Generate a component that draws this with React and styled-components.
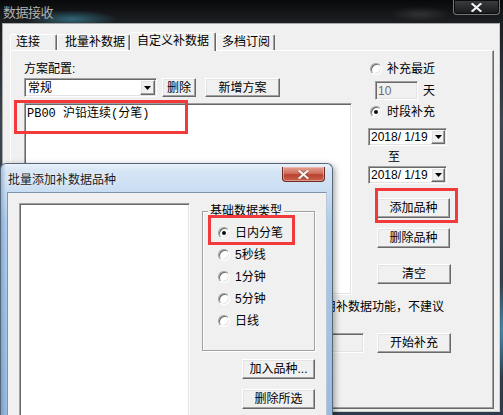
import React from "react";
import styled, { createGlobalStyle, css } from "styled-components";

const GlobalStyle = createGlobalStyle`
  html, body { margin: 0; padding: 0; background: #1b2530; }
  body {
    font-family: "Liberation Sans", "Noto Sans CJK SC", sans-serif;
    font-size: 12px;
    line-height: 14px;
  }
  * { box-sizing: border-box; }
`;

const cjk = `"Liberation Sans", "Noto Sans CJK SC", sans-serif`;

const sunken = css`
  border: 1px solid;
  border-color: #a0a0a0 #ffffff #ffffff #a0a0a0;
  box-shadow: inset 1px 1px #696969, inset -1px -1px #e3e3e3;
`;

const raised = css`
  border: 1px solid;
  border-color: #ffffff #696969 #696969 #ffffff;
  box-shadow: inset -1px -1px #a0a0a0, inset 1px 1px #e3e3e3;
`;

const Desktop = styled.div`
  position: relative;
  width: 503px;
  height: 415px;
  overflow: hidden;
  background: linear-gradient(90deg, #3a4652, #22303d);
`;

const MainWindow = styled.div`
  display: flex;
  flex-direction: column;
  height: 100%;
  background:
    radial-gradient(8px 60px at 502px 330px, rgba(80, 170, 210, 0.7), transparent 80%),
    linear-gradient(180deg, #0b0c0e 0, #1a1d20 22px, #3b4650 120px, #2c3a4a 100%);
`;

const TitleBar = styled.div`
  height: 23px;
  flex-shrink: 0;
  display: flex;
  align-items: flex-start;
  padding-left: 3px;
  background:
    radial-gradient(60px 12px at 72px 19px, rgba(70, 175, 205, 0.5), transparent 75%),
    radial-gradient(40px 10px at 420px 14px, rgba(170, 170, 170, 0.18), transparent 75%),
    linear-gradient(180deg, #08090a, #1d2023);
`;

const TitleText = styled.div`
  margin-top: 3px;
  font-family: "Noto Sans CJK SC", sans-serif;
  font-size: 13px;
  line-height: 17px;
  letter-spacing: -0.5px;
  color: #b2b2b2;
`;

const MainClose = styled.div`
  margin-left: auto;
  margin-right: 3px;
  width: 47px;
  height: 15px;
  border: 1px solid #757575;
  border-top: none;
  border-radius: 0 0 4px 4px;
  background: linear-gradient(180deg, #3c3f42, #17191b);
  box-shadow: inset 0 0 0 1px #0c0c0c;
  display: flex;
  align-items: center;
  justify-content: center;
`;

const Client = styled.div`
  flex: 1;
  min-height: 0;
  margin: 0 3px 3px 2px;
  background: #f0f0f0;
  border: 1px solid;
  border-color: #a9a9a9 #cfcfcf #cfcfcf #a9a9a9;
  padding: 8px 5px 2px 7px;
  display: flex;
  flex-direction: column;
`;

const TabStrip = styled.div`
  display: flex;
  align-items: flex-end;
  height: 18px;
  flex-shrink: 0;
  position: relative;
  z-index: 1;
`;

const Tab = styled.div`
  width: ${(p) => p.$w}px;
  height: ${(p) => (p.$active ? 19 : 16)}px;
  margin-bottom: ${(p) => (p.$active ? -1 : 0)}px;
  border: 1px solid;
  border-bottom: none;
  border-color: #ffffff #696969 transparent #ffffff;
  box-shadow: inset -1px 0 #a0a0a0;
  border-radius: 2px 2px 0 0;
  background: #f0f0f0;
  padding: ${(p) => (p.$active ? 1 : 0)}px 0 0 ${(p) => p.$pl}px;
  font-family: ${cjk};
  white-space: nowrap;
  overflow: hidden;
`;

const Panel = styled.div`
  flex: 1;
  min-height: 0;
  ${raised};
  box-shadow: inset -1px -1px #a0a0a0;
  padding: 11px 0 0 13px;
  display: flex;
  flex-direction: column;
`;

const TopSection = styled.div`
  display: flex;
  gap: 16px;
`;

const LeftCol = styled.div`
  width: 328px;
  display: flex;
  flex-direction: column;
`;

const FieldLabel = styled.div`
  height: 14px;
  margin-bottom: 2px;
`;

const ComboRow = styled.div`
  display: flex;
  align-items: center;
`;

const Combo = styled.div`
  ${sunken};
  width: ${(p) => p.$w}px;
  height: ${(p) => p.$h}px;
  background: #ffffff;
  display: flex;
  align-items: center;
  padding: 0 1px 0 3px;
  font-family: ${(p) => (p.$latin ? `"Liberation Sans", sans-serif` : cjk)};
`;

const ComboText = styled.span`
  flex: 1;
  white-space: nowrap;
`;

const DropButton = styled.div`
  ${raised};
  width: ${(p) => p.$w}px;
  height: ${(p) => p.$h}px;
  background: #f0f0f0;
  display: flex;
  align-items: center;
  justify-content: center;
`;

const Btn = styled.button`
  ${raised};
  width: ${(p) => p.$w}px;
  height: ${(p) => p.$h || 20}px;
  margin: ${(p) => p.$mt || 0}px 0 0 ${(p) => p.$ml || 0}px;
  padding: 0;
  flex-shrink: 0;
  background: #f0f0f0;
  color: #000;
  font-family: ${cjk};
  font-size: 12px;
  line-height: 14px;
  display: flex;
  align-items: center;
  justify-content: center;
  white-space: nowrap;
`;

const ListBox = styled.div`
  ${sunken};
  background: #ffffff;
  width: ${(p) => p.$w}px;
  height: ${(p) => p.$h}px;
  margin-top: ${(p) => p.$mt || 0}px;
  padding: 3px 0 0 2px;
  flex-shrink: 0;
`;

const ListItem = styled.div`
  font-family: "Liberation Mono", "Noto Sans CJK SC", monospace;
  font-size: 12px;
  line-height: 14px;
  white-space: nowrap;
`;

const RightCol = styled.div`
  width: 92px;
  display: flex;
  flex-direction: column;
`;

const RadioRow = styled.div`
  display: flex;
  align-items: center;
  gap: 5px;
  height: ${(p) => p.$h || 14}px;
  margin: ${(p) => p.$mt || 0}px 0 0 ${(p) => p.$ml || 0}px;
  white-space: nowrap;
`;

const RadioDot = styled.span`
  position: relative;
  width: 12px;
  height: 12px;
  flex-shrink: 0;
  border-radius: 50%;
  background: #ffffff;
  border: 1px solid;
  border-color: #a0a0a0 #ffffff #ffffff #a0a0a0;
  box-shadow: inset 1px 1px #696969, inset -1px -1px #e3e3e3;
  &::after {
    content: "";
    display: ${(p) => (p.$checked ? "block" : "none")};
    position: absolute;
    left: 3px;
    top: 3px;
    width: 4px;
    height: 4px;
    border-radius: 50%;
    background: #111;
  }
`;

const DaysRow = styled.div`
  display: flex;
  align-items: center;
  gap: 5px;
  margin: 5px 0 0 7px;
`;

const DisabledInput = styled.div`
  ${sunken};
  width: 43px;
  height: 19px;
  background: #f0f0f0;
  color: #6d6d6d;
  padding: 2px 0 0 2px;
  font-family: "Liberation Sans", sans-serif;
`;

const DateBox = styled(Combo)`
  margin-top: ${(p) => p.$mt}px;
  padding: 0 1px 0 2px;
`;

const ToLabel = styled.div`
  margin: 4px 0 0 20px;
  height: 14px;
`;

const Note = styled.div`
  margin: 5px 0 0 288px;
  height: 28px;
  white-space: nowrap;
  line-height: 14px;
`;

const BottomRow = styled.div`
  display: flex;
  align-items: center;
  margin-top: 5px;
`;

const ProgressBox = styled.div`
  ${sunken};
  width: 340px;
  height: 20px;
  background: #f0f0f0;
`;

/* ---------- dialog ---------- */

const Dialog = styled.div`
  position: absolute;
  left: 0;
  top: 163px;
  width: 333px;
  height: 262px;
  z-index: 2;
  border: 1px solid #56677a;
  border-bottom: none;
  border-radius: 6px 6px 0 0;
  padding: 0 5px 0 6px;
  display: flex;
  flex-direction: column;
  background:
    linear-gradient(90deg, rgba(60, 110, 170, 0.35) 0, rgba(60, 110, 170, 0) 5px),
    linear-gradient(180deg, #eaf2fb 0, #d6e5f5 7px, #c9ddf2 27px, #aecbe9 60px, #98bade 100%);
  box-shadow: 2px 2px 6px rgba(0, 0, 0, 0.35);
`;

const DialogTitleBar = styled.div`
  height: 28px;
  flex-shrink: 0;
  display: flex;
  align-items: flex-start;
`;

const DialogTitle = styled.div`
  margin: 8px 0 0 1px;
  font-family: "Noto Sans CJK SC", sans-serif;
  font-size: 12px;
  line-height: 14px;
  color: #1c1c1c;
  text-shadow: 0 0 6px rgba(255, 255, 255, 0.9);
`;

const DialogClose = styled.div`
  margin: 3px 2px 0 auto;
  width: 43px;
  height: 15px;
  border: 1px solid #6a2c24;
  border-top: none;
  border-radius: 0 0 4px 4px;
  background: linear-gradient(180deg, #e6a192 0, #d0705e 45%, #b8432f 55%, #c9604a 100%);
  box-shadow: inset 0 0 0 1px rgba(255, 210, 200, 0.5);
  display: flex;
  align-items: center;
  justify-content: center;
`;

const DialogClient = styled.div`
  flex: 1;
  min-height: 0;
  overflow: hidden;
  background: #f0f0f0;
  border: 1px solid;
  border-color: #8093a8 #b9c8d8 transparent #8093a8;
  padding: 10px 0 0 11px;
  display: flex;
  align-items: flex-start;
  gap: 12px;
`;

const DialogSide = styled.div`
  width: 113px;
  display: flex;
  flex-direction: column;
  align-items: flex-end;
`;

const GroupBox = styled.fieldset`
  width: 113px;
  margin: 1px 0 0 0;
  padding: 4px 0 18px 0;
  border: 1px solid #a0a0a0;
  box-shadow: inset 1px 1px #ffffff, 1px 1px #ffffff;
  min-inline-size: 0;
`;

const Legend = styled.legend`
  margin-left: 5px;
  padding: 0 2px;
  font-family: ${cjk};
  font-size: 12px;
  line-height: 14px;
  background: #f0f0f0;
`;

const RadioList = styled.div`
  display: flex;
  flex-direction: column;
  padding-left: 15px;
`;

/* ---------- annotations ---------- */

const Mark = styled.div`
  position: absolute;
  z-index: 3;
  left: ${(p) => p.$x}px;
  top: ${(p) => p.$y}px;
  width: ${(p) => p.$w}px;
  height: ${(p) => p.$h}px;
  border: 3px solid #f23a3a;
  pointer-events: none;
`;

const Arrow = () => (
  <svg width="7" height="4" viewBox="0 0 7 4">
    <path d="M0 0H7L3.5 4Z" fill="#000" />
  </svg>
);

const XGlyph = ({ color = "#f2f2f2", shadow = "#000" }) => (
  <svg width="11" height="9" viewBox="0 0 11 9">
    <path d="M1.5 1L9.5 8M9.5 1L1.5 8" stroke={shadow} strokeWidth="3.4" strokeLinecap="square" opacity="0.45" />
    <path d="M1.5 1L9.5 8M9.5 1L1.5 8" stroke={color} strokeWidth="2.2" strokeLinecap="square" />
  </svg>
);

const tabs = [
  { label: "连接", w: 47, pl: 5 },
  { label: "批量补数据", w: 73, pl: 7 },
  { label: "自定义补数据", w: 86, pl: 6, active: true },
  { label: "多档订阅", w: 59, pl: 5 },
];

const kinds = [
  { label: "日内分笔", checked: true },
  { label: "5秒线" },
  { label: "1分钟" },
  { label: "5分钟" },
  { label: "日线" },
];

export default function App() {
  return (
    <>
      <GlobalStyle />
      <Desktop>
        <MainWindow>
          <TitleBar>
            <TitleText>数据接收</TitleText>
            <MainClose>
              <XGlyph />
            </MainClose>
          </TitleBar>
          <Client>
            <TabStrip>
              {tabs.map((t) => (
                <Tab key={t.label} $w={t.w} $pl={t.pl} $active={t.active}>
                  {t.label}
                </Tab>
              ))}
            </TabStrip>
            <Panel>
              <TopSection>
                <LeftCol>
                  <FieldLabel>方案配置:</FieldLabel>
                  <ComboRow>
                    <Combo $w={133} $h={19}>
                      <ComboText>常规</ComboText>
                      <DropButton $w={15} $h={15}>
                        <Arrow />
                      </DropButton>
                    </Combo>
                    <Btn $w={34} $h={19} $ml={5}>删除</Btn>
                    <Btn $w={75} $h={19} $ml={9}>新增方案</Btn>
                  </ComboRow>
                  <ListBox $w={328} $h={192} $mt={6}>
                    <ListItem>PB00 沪铅连续(分笔)</ListItem>
                  </ListBox>
                </LeftCol>
                <RightCol>
                  <RadioRow $ml={2}>
                    <RadioDot />
                    补充最近
                  </RadioRow>
                  <DaysRow>
                    <DisabledInput>10</DisabledInput>
                    天
                  </DaysRow>
                  <RadioRow $ml={2} $mt={5}>
                    <RadioDot $checked />
                    时段补充
                  </RadioRow>
                  <DateBox $w={79} $h={18} $mt={9} $latin>
                    <ComboText>2018/ 1/19</ComboText>
                    <DropButton $w={14} $h={14}>
                      <Arrow />
                    </DropButton>
                  </DateBox>
                  <ToLabel>至</ToLabel>
                  <DateBox $w={79} $h={18} $mt={2} $latin>
                    <ComboText>2018/ 1/19</ComboText>
                    <DropButton $w={14} $h={14}>
                      <Arrow />
                    </DropButton>
                  </DateBox>
                  <Btn $w={73} $ml={9} $mt={14}>添加品种</Btn>
                  <Btn $w={73} $ml={9} $mt={10}>删除品种</Btn>
                  <Btn $w={74} $ml={9} $mt={16}>清空</Btn>
                </RightCol>
              </TopSection>
              <Note>使用补数据功能，不建议</Note>
              <BottomRow>
                <ProgressBox />
                <Btn $w={74} $ml={13}>开始补充</Btn>
              </BottomRow>
            </Panel>
          </Client>
        </MainWindow>

        <Dialog>
          <DialogTitleBar>
            <DialogTitle>批量添加补数据品种</DialogTitle>
            <DialogClose>
              <XGlyph shadow="#5a1a10" />
            </DialogClose>
          </DialogTitleBar>
          <DialogClient>
            <ListBox $w={171} $h={260} />
            <DialogSide>
              <GroupBox>
                <Legend>基础数据类型</Legend>
                <RadioList>
                  {kinds.map((k) => (
                    <RadioRow key={k.label} $h={22}>
                      <RadioDot $checked={k.checked} />
                      {k.label}
                    </RadioRow>
                  ))}
                </RadioList>
              </GroupBox>
              <Btn $w={73} $mt={8}>加入品种...</Btn>
              <Btn $w={73} $mt={10}>删除所选</Btn>
            </DialogSide>
          </DialogClient>
        </Dialog>

        <Mark $x={14} $y={100} $w={174} $h={34} />
        <Mark $x={375} $y={188} $w={83} $h={35} />
        <Mark $x={208} $y={215} $w={87} $h={30} />
      </Desktop>
    </>
  );
}
